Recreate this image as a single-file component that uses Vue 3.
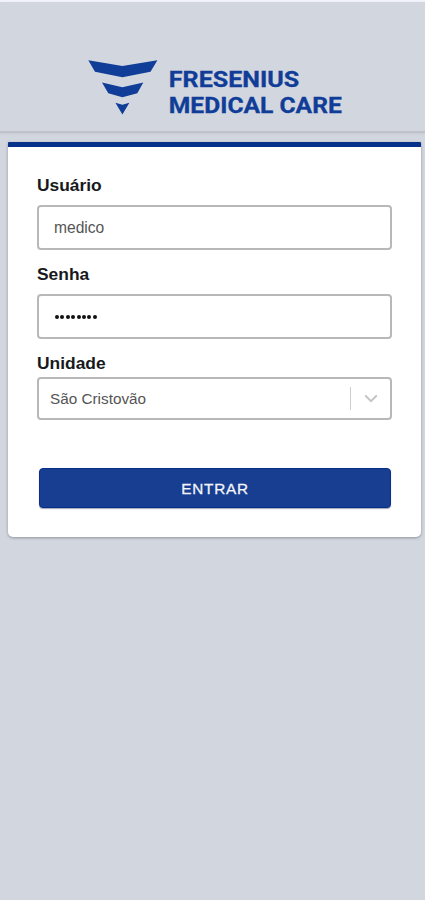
<script setup>
import { ref } from 'vue'

const user = ref('medico')
const password = ref('medico12')
const unit = ref('São Cristovão')
</script>

<template>
  <div class="page">
    <header class="header">
      <svg class="logo" width="264" height="64" viewBox="86 57 264 64" role="img">
        <g class="mark">
          <path d="M88.3 60.3L122.4 66L157.4 60.3L150.5 71.8L122.4 77.3L95 71.8Z" />
          <path d="M102 82.6L122.4 87.2L143.3 82.6L137.3 93.3L122.4 97.3L108.3 93.3Z" />
          <path d="M115.4 102.8L122.4 104.7L129.4 102.8L122.4 114.6Z" />
        </g>
        <text x="168.8" y="87" textLength="130.5" lengthAdjust="spacingAndGlyphs">FRESENIUS</text>
        <text x="168.8" y="112.9" textLength="173" lengthAdjust="spacingAndGlyphs">MEDICAL CARE</text>
      </svg>
    </header>

    <main class="card">
      <form class="form" @submit.prevent>
        <label for="user">Usuário</label>
        <input id="user" v-model="user" class="field" type="text" />
        <label for="password">Senha</label>
        <div class="field password">
          <span v-for="n in password.length" :key="n" class="dot"></span>
        </div>
        <label>Unidade</label>
        <div class="select">
          <span class="value">{{ unit }}</span>
          <span class="divider"></span>
          <svg class="chevron" width="14" height="10" viewBox="0 0 14 10">
            <path d="M1.8 2L7 7.2L12.2 2" />
          </svg>
        </div>
        <button class="submit" type="submit">ENTRAR</button>
      </form>
    </main>
  </div>
</template>

<style>
body {
  margin: 0;
  background: #d2d6df;
}
</style>

<style scoped>
.page {
  box-sizing: border-box;
  min-height: 900px;
  border-top: 2px solid #f3f4fb;
  background: #d2d6df;
  font-family: "Liberation Sans", Arial, sans-serif;
}
.header {
  box-sizing: border-box;
  height: 131px;
  padding: 55px 0 0 86px;
  border-bottom: 2px solid #bfc2ca;
  box-shadow: 0 1px 2px #c8cbd3;
}
.logo {
  display: block;
}
.mark,
.logo text {
  fill: #103d98;
}
.logo text {
  font: 700 22px Roboto, sans-serif;
  stroke: #103d98;
  stroke-width: 0.3;
}
.card {
  box-sizing: border-box;
  height: 395px;
  margin: 9px 4px 0 8px;
  padding: 28px 29px 0;
  border-top: 5px solid #07308a;
  border-radius: 1px 1px 5px 5px;
  background: #fff;
  box-shadow: 0 1px 3px #8f949d;
}
.form {
  display: flex;
  flex-direction: column;
}
label {
  height: 30px;
  font-size: 17.4px;
  font-weight: 700;
  line-height: 20px;
  color: #17191c;
}
.field,
.select {
  box-sizing: border-box;
  width: 355px;
  border: 2px solid #b8b8b8;
  border-radius: 4px;
  background: #fff;
  color: #555;
}
.field {
  height: 45px;
  margin: 0 0 13.5px;
  padding: 0 15px;
  font: 15.6px "Liberation Sans", Arial, sans-serif;
  outline: none;
}
.password {
  display: flex;
  align-items: center;
  gap: 1.4px;
  margin-bottom: 14.5px;
  padding: 1px 15px 0 16px;
}
.dot {
  width: 4px;
  height: 4px;
  border-radius: 50%;
  background: #111;
}
.password + label {
  height: 24px;
}
.select {
  display: flex;
  align-items: center;
  height: 43px;
  padding: 0 12px 0 11px;
  font-size: 15.3px;
}
.value {
  flex: 1;
}
.divider {
  width: 1px;
  height: 23px;
  margin-right: 13px;
  background: #ccc;
}
.chevron path {
  fill: none;
  stroke: #c4c4c4;
  stroke-width: 2;
  stroke-linecap: round;
}
.submit {
  width: 352px;
  height: 40px;
  margin: 48px 0 0 2px;
  padding: 2px 0 0;
  border: 1px solid #08308a;
  border-radius: 4px;
  background: #173e91;
  box-shadow: 0 1px 1px #a0a6b5;
  color: #f3f5fa;
  font: 15.3px "Liberation Sans", Arial, sans-serif;
  letter-spacing: 0.8px;
  -webkit-text-stroke: 0.3px #f3f5fa;
}
</style>
